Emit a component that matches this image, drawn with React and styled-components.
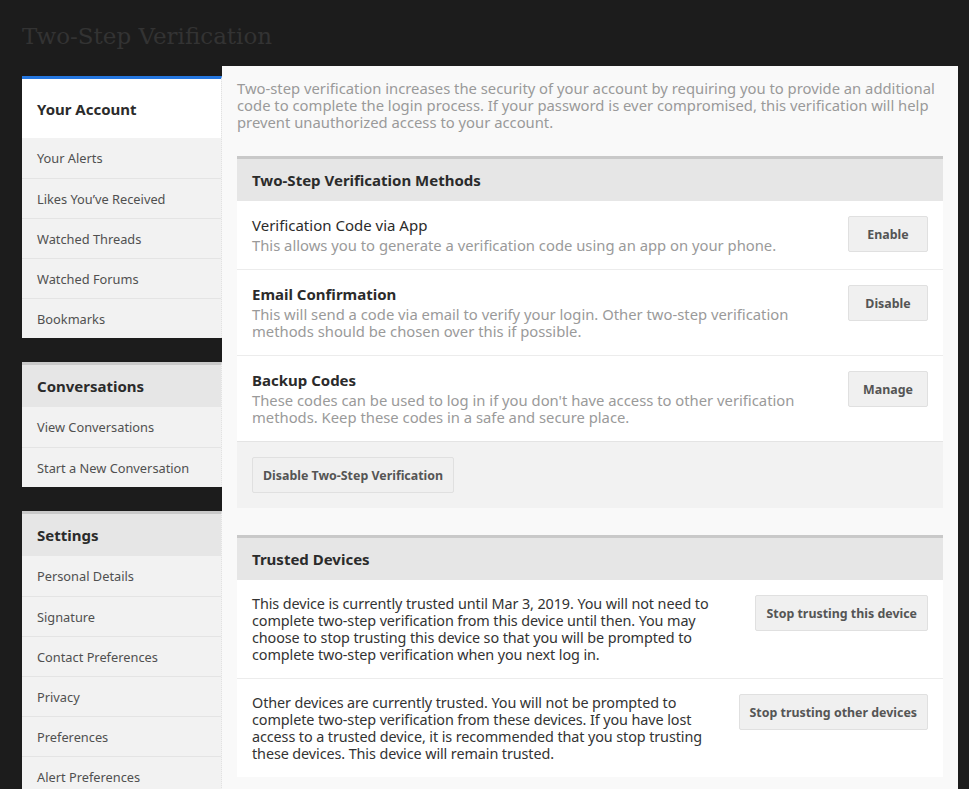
import React from 'react';
import styled, { createGlobalStyle } from 'styled-components';

const Global = createGlobalStyle`
  html, body { margin: 0; padding: 0; background: #1c1c1c; }
  body { font-family: "Noto Sans", "Open Sans", sans-serif; -webkit-font-smoothing: antialiased; }
  * { box-sizing: border-box; }
`;

const Page = styled.div`
  padding: 0 11px 0 22px;
  min-height: 789px;
`;

const Title = styled.h1`
  margin: 0;
  height: 66px;
  padding-top: 21px;
  font-family: "DejaVu Serif", "Liberation Serif", serif;
  font-weight: normal;
  font-size: 23px;
  line-height: 30px;
  color: #333333;
`;

const Layout = styled.div`
  display: flex;
  align-items: flex-start;
`;

const Sidebar = styled.nav`
  width: 200px;
  flex: none;
  margin-top: 10px;
  display: flex;
  flex-direction: column;
  gap: 24px;
`;

const NavBlock = styled.div`
  border-top: 3px solid ${p => (p.active ? '#2577e0' : '#c9c9c9')};
  background: #f2f2f2;
  border-right: 1px dotted #e2e2e2;
`;

const NavHeader = styled.div`
  display: flex;
  align-items: center;
  height: ${p => (p.active ? '59px' : '42px')};
  padding: 0 15px;
  background: ${p => (p.active ? '#ffffff' : '#e6e6e6')};
  font-size: 15px;
  font-weight: bold;
  color: #2b2b2b;
`;

const NavItem = styled.a`
  display: flex;
  align-items: center;
  height: 40px;
  padding: 0 15px;
  font-size: 12.8px;
  color: #505050;
  text-decoration: none;
  & + & { border-top: 1px solid #e4e4e4; }
`;

const Main = styled.main`
  flex: 1;
  background: #f9f9f9;
  padding: 14px 15px 15px;
  min-height: 723px;
`;

const Intro = styled.p`
  margin: 0 0 25px;
  font-size: 14.8px;
  line-height: 17px;
  color: #9a9a9a;
`;

const Block = styled.section`
  border-top: 3px solid #c9c9c9;
  margin-bottom: 27px;
`;

const BlockHeader = styled.h2`
  margin: 0;
  height: 42px;
  display: flex;
  align-items: center;
  padding: 0 15px;
  background: #e6e6e6;
  font-size: 15px;
  font-weight: bold;
  color: #2b2b2b;
`;

const Row = styled.div`
  display: flex;
  align-items: flex-start;
  gap: 15px;
  padding: 15px;
  background: #ffffff;
  & + & { border-top: 1px solid #ececec; }
`;

const RowText = styled.div`
  flex: 1;
  min-width: 0;
`;

const RowTitle = styled.div`
  font-size: 15px;
  line-height: 18px;
  font-weight: ${p => (p.strong ? 'bold' : 'normal')};
  color: #2b2b2b;
`;

const RowDesc = styled.div`
  font-size: ${p => (p.dark ? '14.4px' : '14.8px')};
  letter-spacing: ${p => (p.dark ? '-0.1px' : 'normal')};
  line-height: 17px;
  color: ${p => (p.dark ? '#333333' : '#9a9a9a')};
  margin-top: ${p => (p.dark ? '0' : '3px')};
`;

const Footer = styled.div`
  padding: 15px;
  background: #f2f2f2;
  border-top: 1px solid #e4e4e4;
`;

const Button = styled.button`
  flex: none;
  min-width: 80px;
  height: 36px;
  padding: 0 10px;
  border: 1px solid #e0e0e0;
  border-radius: 2px;
  background: #f0f0f0;
  font-family: inherit;
  font-size: 12.4px;
  font-weight: bold;
  color: #555555;
  cursor: pointer;
`;

const nav = [
  {
    title: 'Your Account',
    active: true,
    items: ['Your Alerts', 'Likes You\u2019ve Received', 'Watched Threads', 'Watched Forums', 'Bookmarks'],
  },
  {
    title: 'Conversations',
    items: ['View Conversations', 'Start a New Conversation'],
  },
  {
    title: 'Settings',
    items: ['Personal Details', 'Signature', 'Contact Preferences', 'Privacy', 'Preferences', 'Alert Preferences'],
  },
];

const methods = [
  {
    title: 'Verification Code via App',
    desc: 'This allows you to generate a verification code using an app on your phone.',
    action: 'Enable',
  },
  {
    title: 'Email Confirmation',
    strong: true,
    desc: 'This will send a code via email to verify your login. Other two-step verification methods should be chosen over this if possible.',
    action: 'Disable',
  },
  {
    title: 'Backup Codes',
    strong: true,
    desc: "These codes can be used to log in if you don't have access to other verification methods. Keep these codes in a safe and secure place.",
    action: 'Manage',
  },
];

const devices = [
  {
    text: 'This device is currently trusted until Mar 3, 2019. You will not need to complete two-step verification from this device until then. You may choose to stop trusting this device so that you will be prompted to complete two-step verification when you next log in.',
    action: 'Stop trusting this device',
  },
  {
    text: 'Other devices are currently trusted. You will not be prompted to complete two-step verification from these devices. If you have lost access to a trusted device, it is recommended that you stop trusting these devices. This device will remain trusted.',
    action: 'Stop trusting other devices',
  },
];

export default function App() {
  return (
    <Page>
      <Global />
      <Title>Two-Step Verification</Title>
      <Layout>
        <Sidebar>
          {nav.map(block => (
            <NavBlock key={block.title} active={block.active}>
              <NavHeader active={block.active}>{block.title}</NavHeader>
              {block.items.map(item => (
                <NavItem key={item}>{item}</NavItem>
              ))}
            </NavBlock>
          ))}
        </Sidebar>
        <Main>
          <Intro>
            Two-step verification increases the security of your account by requiring you to provide an additional
            code to complete the login process. If your password is ever compromised, this verification will help
            prevent unauthorized access to your account.
          </Intro>

          <Block>
            <BlockHeader>Two-Step Verification Methods</BlockHeader>
            {methods.map(m => (
              <Row key={m.title}>
                <RowText>
                  <RowTitle strong={m.strong}>{m.title}</RowTitle>
                  <RowDesc>{m.desc}</RowDesc>
                </RowText>
                <Button>{m.action}</Button>
              </Row>
            ))}
            <Footer>
              <Button>Disable Two-Step Verification</Button>
            </Footer>
          </Block>

          <Block>
            <BlockHeader>Trusted Devices</BlockHeader>
            {devices.map(d => (
              <Row key={d.action}>
                <RowText>
                  <RowDesc dark>{d.text}</RowDesc>
                </RowText>
                <Button>{d.action}</Button>
              </Row>
            ))}
          </Block>
        </Main>
      </Layout>
    </Page>
  );
}
